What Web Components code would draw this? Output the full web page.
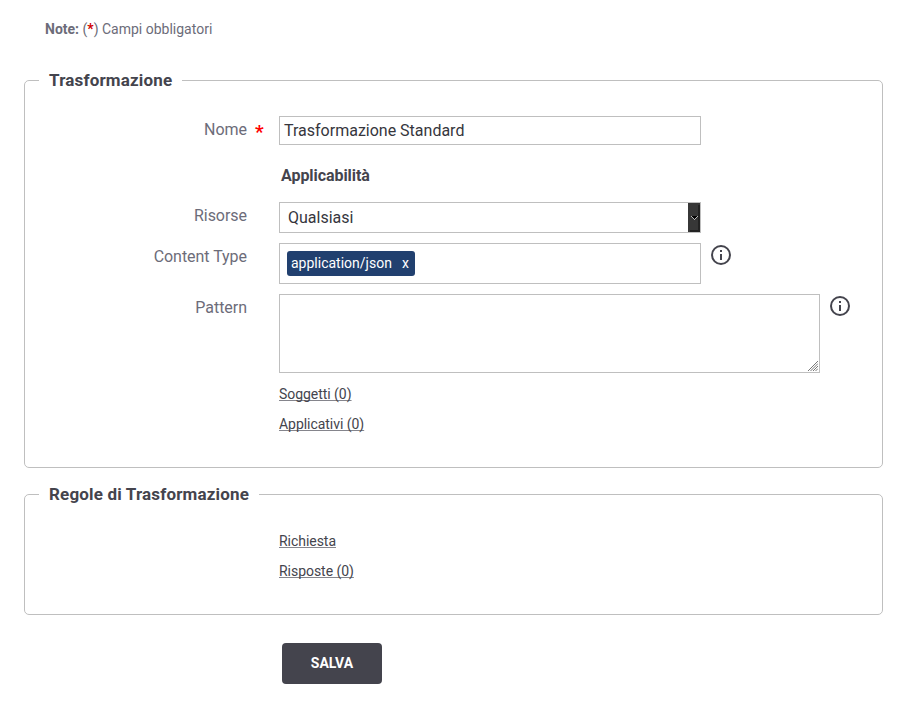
<!DOCTYPE html>
<html lang="it">
<head>
<meta charset="utf-8">
<title>Trasformazione</title>
<style>
body { margin: 0; background: #fff; color: #6c6c79; font: 16px/20px Roboto, sans-serif; }
</style>
</head>
<body>
<transform-page>
  <form-note></form-note>
  <form-group heading="Trasformazione" style="--top:26px">
    <form-row label="Nome" required><text-box>Trasformazione Standard</text-box></form-row>
    <sub-title>Applicabilità</sub-title>
    <form-row label="Risorse"><select-box>Qualsiasi</select-box></form-row>
    <form-row label="Content Type" class="gap"><tag-box><tag-chip>application/json</tag-chip></tag-box><info-icon></info-icon></form-row>
    <form-row label="Pattern" class="gap"><area-box></area-box><info-icon></info-icon></form-row>
    <link-list style="--offset:6px"><link-item>Soggetti (0)</link-item><link-item>Applicativi (0)</link-item></link-list>
  </form-group>
  <form-group heading="Regole di Trasformazione" style="--top:22px">
    <link-list><link-item>Richiesta</link-item><link-item>Risposte (0)</link-item></link-list>
  </form-group>
  <save-button>SALVA</save-button>
</transform-page>
<script>
const define = (name, render) => customElements.define(name, class extends HTMLElement {
  constructor() {
    super();
    this.attachShadow({ mode: 'open' });
  }
  connectedCallback() {
    this.shadowRoot.innerHTML = render(this);
  }
});

define('transform-page', () => `
  <style>:host { display: flex; flex-direction: column; box-sizing: border-box; width: 906px; height: 716px; padding: 19px 23px 0 24px; }</style>
  <slot></slot>`);

define('form-note', () => `
  <style>:host { display: block; font-size: 14px; margin: 0 0 31px 21px; } i { color: #d00000; font-style: normal; font-weight: 700; }</style>
  <b>Note:</b> (<i>*</i>) Campi obbligatori`);

define('form-group', el => `
  <style>:host { display: block; }
  :host(:nth-of-type(2)) { margin-top: 16px; }
  fieldset { margin: 0; min-width: 0; border: 1px solid #bfbfbf; border-radius: 5px; padding: var(--top) 0 28px; }
  legend { margin-left: 14px; padding: 0 10px; height: 20px; font-weight: 700; font-size: 17px; letter-spacing: .165px; color: #44444d; }</style>
  <fieldset><legend>${el.getAttribute('heading')}</legend><slot></slot></fieldset>`);

define('form-row', el => `
  <style>:host { display: grid; grid-template-columns: 222px 32px 1fr; }
  :host(.gap) { margin-top: 10px; }
  label { text-align: right; padding-top: 4px; letter-spacing: -.04px; }
  em { font-style: normal; font-weight: 700; color: #f00; font-size: 19px; padding: 6px 0 0 8px; height: 20px; }
  .field { display: flex; align-items: flex-start; gap: 10px; }</style>
  <label>${el.getAttribute('label')}</label><em>${el.hasAttribute('required') ? '*' : ''}</em><div class="field"><slot></slot></div>`);

define('text-box', () => `
  <style>:host { display: block; box-sizing: border-box; width: 422px; height: 29px; border: 1px solid #bfbfbf; padding: 4px; color: #36363d; }</style><slot></slot>`);

define('sub-title', () => `
  <style>:host { display: flex; align-items: center; box-sizing: border-box; height: 57px; padding: 5px 0 0 256px; font-weight: 700; letter-spacing: -.06px; color: #44444d; }</style><slot></slot>`);

define('select-box', () => `
  <style>:host { display: flex; box-sizing: border-box; width: 422px; height: 31px; border: 1px solid #bfbfbf; color: #36363d; }
  span { flex: 1; padding: 5px 8px 4px; }
  svg { display: block; }</style>
  <span><slot></slot></span>
  <svg width="12" height="29" shape-rendering="crispEdges"><path fill="#373737" d="M0 0h12v29H0z"/><path fill="#222" d="M10 2h2v27H2v-2h8z"/><path fill="#000" d="M4 13h5v1H8v1H7v1H6v-1H5v-1H4z"/><path fill="#bbb" d="M3 13h1v1H3zM4 14h1v1H4zM5 15h1v1H5zM6 16h1v1H6zM7 15h1v1H7zM8 14h1v1H8zM9 13h1v1H9z"/></svg>`);

define('tag-box', () => `
  <style>:host { display: flex; align-items: flex-start; box-sizing: border-box; width: 422px; height: 41px; border: 1px solid #bfbfbf; padding: 7px; }</style><slot></slot>`);

define('tag-chip', () => `
  <style>:host { display: flex; justify-content: space-between; box-sizing: border-box; width: 128px; height: 25px; border-radius: 3px; background: #21406f; color: #fff; font-size: 14px; line-height: 25px; padding: 0 6px 0 4px; }</style><slot></slot><span>x</span>`);

define('area-box', () => `
  <style>:host { display: flex; align-items: flex-end; justify-content: flex-end; box-sizing: border-box; width: 541px; height: 79px; border: 1px solid #bfbfbf; }
  svg { margin: 0 1px 1px 0; }</style>
  <svg width="10" height="10" stroke="#777" stroke-width="1"><path d="M0 10L10 0M2.500 10L10 2.500M5 10L10 5M7.500 10L10 7.500"/></svg>`);

define('info-icon', () => `
  <style>:host { display: block; padding-top: 2px; } svg { display: block; }</style>
  <svg width="20" height="20"><circle cx="10" cy="10" r="9" fill="none" stroke="#44444d" stroke-width="2"/><path fill="#44444d" d="M9 5h2v2H9zM9 9h2v6H9z"/></svg>`);

define('link-list', () => `
  <style>:host { display: flex; flex-direction: column; align-items: flex-start; padding: var(--offset, 0px) 0 0 254px; }</style><slot></slot>`);

define('link-item', () => `
  <style>:host { display: block; height: 30px; line-height: 30px; font-size: 14px; letter-spacing: -.04px; color: #44444d; }
  a { text-decoration: underline; text-decoration-skip-ink: none; text-underline-offset: 1px; text-decoration-color: #85858c; }</style><a><slot></slot></a>`);

define('save-button', () => `
  <style>:host { display: block; margin: 28px 0 0 258px; } button { display: block; width: 100px; height: 41px; padding: 0 0 2px; border: 0; border-radius: 4px; background: #44444d; color: #fff; font: 700 14px/20px Roboto, sans-serif; }</style>
  <button><slot></slot></button>`);
</script>
</body>
</html>
